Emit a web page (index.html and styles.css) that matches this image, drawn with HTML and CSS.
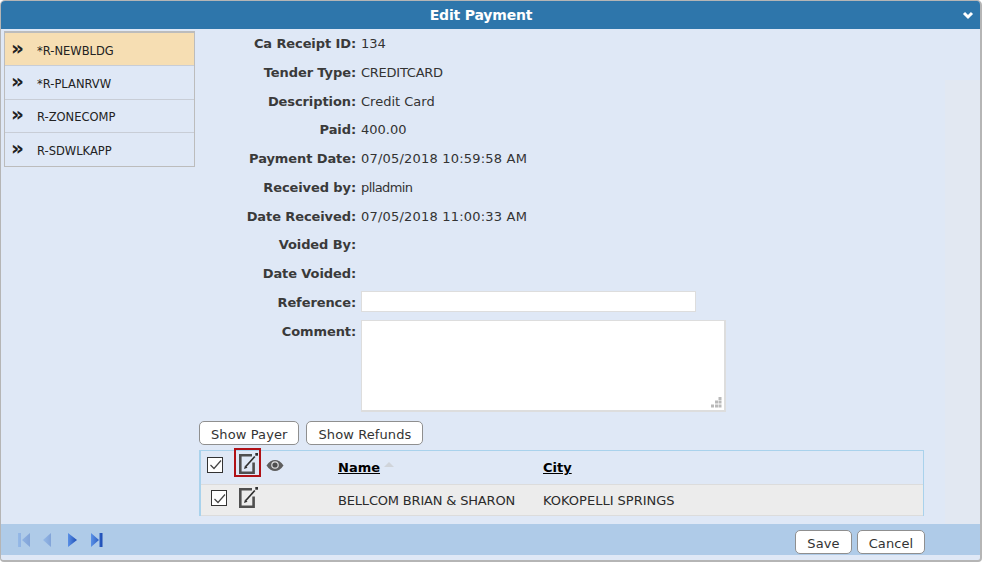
FILE: index.html
```html
<!DOCTYPE html>
<html lang="en">
<head>
<meta charset="utf-8">
<title>Edit Payment</title>
<link rel="stylesheet" href="styles.css">
</head>
<body>
<svg class="defs" width="0" height="0"><defs>
  <linearGradient id="tri" x1="0" y1="0" x2="1" y2="0"><stop offset="0" stop-color="#5a90e6"/><stop offset="1" stop-color="#1c4cb6"/></linearGradient>
  <symbol id="edit" viewBox="0 0 19 21"><path d="M13 2.300H1.300v17.400h13.300V9.500" fill="none" stroke="#4f4f4f" stroke-width="2.600"/><path d="M6.800 13.500 L15.800 3.500" fill="none" stroke="#2e2e2e" stroke-width="1.700"/><path d="M5 16l1-3.500 2.500 2.200z" fill="#2e2e2e"/><rect x="16.300" y="0" width="2.700" height="2.700" fill="#2e2e2e"/></symbol>
</defs></svg>
<div class="panel">
  <header class="head">
    <span class="head-title">Edit Payment</span>
    <svg class="head-chev" width="12" height="9" viewBox="0 0 12 9"><path d="M2 2 L6 6 L10 2" fill="none" stroke="#fff" stroke-width="3"/></svg>
  </header>
  <div class="body">
    <ul class="side">
      <li class="side-item active"><span class="raquo">»</span><span>*R-NEWBLDG</span></li>
      <li class="side-item"><span class="raquo">»</span><span>*R-PLANRVW</span></li>
      <li class="side-item"><span class="raquo">»</span><span>R-ZONECOMP</span></li>
      <li class="side-item"><span class="raquo">»</span><span>R-SDWLKAPP</span></li>
    </ul>
    <main class="content">
      <div class="form">
        <div class="lbl">Ca Receipt ID:</div><div class="val">134</div>
        <div class="lbl">Tender Type:</div><div class="val narrow">CREDITCARD</div>
        <div class="lbl">Description:</div><div class="val">Credit Card</div>
        <div class="lbl">Paid:</div><div class="val">400.00</div>
        <div class="lbl">Payment Date:</div><div class="val wide">07/05/2018 10:59:58 AM</div>
        <div class="lbl">Received by:</div><div class="val narrower">plladmin</div>
        <div class="lbl">Date Received:</div><div class="val wide">07/05/2018 11:00:33 AM</div>
        <div class="lbl">Voided By:</div><div class="val"></div>
        <div class="lbl">Date Voided:</div><div class="val"></div>
        <div class="lbl">Reference:</div><div class="val"><input class="ref" type="text"></div>
        <div class="lbl">Comment:</div><div class="val"><div class="comment"><svg class="grip" width="11" height="11" viewBox="0 0 11 11"><path fill="#b9b9b9" d="M7.500 0h3v3h-3zM4 3.500h3v3H4zM7.500 3.500h3v3h-3zM0 7.500h3v3H0zM4 7.500h3v3H4zM7.500 7.500h3v3h-3z"/></svg></div></div>
      </div>
      <div class="btn-row">
        <button class="btn" type="button">Show Payer</button>
        <button class="btn" type="button">Show Refunds</button>
      </div>
      <div class="grid">
        <div class="grid-row grid-head">
          <span class="cell-check"><span class="check"><svg width="13" height="11" viewBox="0 0 13 11"><path d="M1.500 6 L5 9.500 L12 1.500" fill="none" stroke="#444" stroke-width="1.200"/></svg></span></span>
          <span class="cell-edit"><span class="edit-focus"><svg width="19" height="21"><use href="#edit"/></svg></span></span>
          <span class="cell-eye"><svg width="18" height="13" viewBox="0 0 18 13"><path d="M0.500 6.500C3 2.500 6 1 9 1s6 1.500 8.500 5.500C15 10.500 12 12 9 12S3 10.500 0.500 6.500z" fill="#5e5e5e"/><circle cx="9" cy="6" r="3.800" fill="#ddd"/><circle cx="9" cy="6" r="2.600" fill="#4e4e4e"/></svg></span>
          <span class="cell-name"><a class="sort" href="#">Name</a><svg class="sort-arrow" width="10" height="5" viewBox="0 0 10 5"><path d="M5 0l5 5H0z" fill="#d0d4da"/></svg></span>
          <span class="cell-city"><a class="sort" href="#">City</a></span>
        </div>
        <div class="grid-row grid-data">
          <span class="cell-check"><span class="check"><svg width="13" height="11" viewBox="0 0 13 11"><path d="M1.500 6 L5 9.500 L12 1.500" fill="none" stroke="#444" stroke-width="1.200"/></svg></span></span>
          <span class="cell-edit"><svg class="row-edit" width="19" height="21"><use href="#edit"/></svg></span>
          <span class="cell-eye"></span>
          <span class="cell-name name-text">BELLCOM BRIAN &amp; SHARON</span>
          <span class="cell-city">KOKOPELLI SPRINGS</span>
        </div>
      </div>
    </main>
  </div>
  <footer class="foot">
    <div class="pager">
      <svg class="off" width="14" height="16" viewBox="0 0 14 16"><path d="M1 1h3v14H1z M13 1v14L5 8z" fill="url(#tri)"/></svg>
      <svg class="off" width="14" height="16" viewBox="0 0 14 16"><path d="M10 1v14L2 8z" fill="url(#tri)"/></svg>
      <svg width="14" height="16" viewBox="0 0 14 16"><path d="M3 1v14l9-7z" fill="url(#tri)"/></svg>
      <svg width="14" height="16" viewBox="0 0 14 16"><path d="M2 1v14l8-7z M10.500 1h3v14h-3z" fill="url(#tri)"/></svg>
    </div>
    <div class="foot-btns">
      <button class="btn btn-save" type="button">Save</button>
      <button class="btn btn-cancel" type="button">Cancel</button>
    </div>
  </footer>
</div>
</body>
</html>
```
FILE: styles.css
```css
* { box-sizing: border-box; }
html, body { margin: 0; height: 100%; background: #fff; }
body { font-family: "DejaVu Sans", Verdana, sans-serif; font-size: 13px; color: #2b2b2b; }
.defs { position: absolute; }
.panel { width: 982px; height: 562px; display: flex; flex-direction: column; background: #dfe8f6; border: 1px solid #b5b5b5; border-right-width: 2px; border-bottom-width: 2px; border-radius: 5px 5px 4px 4px; overflow: hidden; }
.head { flex: none; height: 28px; background: #2e76ab; display: flex; align-items: center; justify-content: center; padding-right: 19px; position: relative; }
.head-title { color: #fff; font-weight: bold; font-size: 14px; letter-spacing: -.18px; }
.head-chev { position: absolute; right: 6px; top: 10px; }
.body { flex: 1; display: flex; min-height: 0; background: linear-gradient(#e2e8f2, #e2e8f2) no-repeat 944px 51px / 36px 100%; }
.side { list-style: none; margin: 2px 0 0 3px; padding: 0; width: 191px; height: 136px; border: 1px solid #bcbcbc; border-top-width: 2px; flex: none; }
.side-item { height: 33.250px; display: flex; align-items: center; padding-top: 3px; border-bottom: 1px solid #c8cdd6; font-size: 11.500px; color: #222; }
.side-item:last-child { border-bottom: 0; }
.side-item.active { background: #f6deb3; }
.raquo { width: 32px; padding-left: 6px; font-size: 20px; line-height: 1; font-weight: bold; color: #222; position: relative; top: -3px; }
.content { width: 726px; margin-left: 4px; }
.form { display: grid; grid-template-columns: 157px 1fr; grid-auto-rows: 28.750px; column-gap: 5px; }
.lbl { text-align: right; font-weight: bold; line-height: 30px; color: #3a3a3a; white-space: nowrap; letter-spacing: -.1px; }
.val { line-height: 30px; color: #333; }
.narrow { letter-spacing: -.25px; }
.narrower { letter-spacing: -.6px; }
.wide { letter-spacing: .2px; }
.ref { display: block; margin-top: 3px; width: 335px; height: 21px; border: 1px solid #ddd; background: #fff; padding: 0; }
.comment { position: relative; margin-top: 3px; width: 365px; height: 92px; background: #fff; border: 1px solid #ddd; border-width: 1px 2px 2px 1px; }
.grip { position: absolute; right: 2px; bottom: 2px; }
.btn-row { display: flex; gap: 7px; margin-top: 76px; }
.btn { font-family: inherit; font-size: 13px; color: #333; height: 24px; padding: 2px 11px 0; background: #fff; border: 1px solid #8f8f8f; border-radius: 5px; letter-spacing: .1px; }
.btn-save { width: 57px; padding-left: 0; padding-right: 0; }
.btn-cancel { width: 68px; padding-left: 0; padding-right: 0; }
.grid { margin-top: 5px; width: 725px; border-left: 2px solid #a9d2ec; border-top: 1px solid #a9d2ec; border-right: 1px solid #a9d2ec; }
.grid-row { display: flex; align-items: center; }
.grid-head { height: 33px; }
.grid-data { height: 32px; background: #ececec; border-top: 1px solid #dcdcdc; border-bottom: 1px solid #dcdcdc; }
.cell-check { width: 34px; padding-left: 6px; display: flex; }
.grid-head .check { margin-bottom: 6px; }
.grid-data .cell-check { padding-left: 10px; }
.grid-data .check { margin-bottom: 4px; }
.check { width: 16px; height: 16px; border: 1px solid #333; background: #fff; display: flex; align-items: center; justify-content: center; }
.cell-edit { width: 31px; display: flex; }
.edit-focus { flex: none; width: 27px; height: 29px; margin-left: -1px; margin-bottom: 10px; border: 2px solid #b01116; display: flex; align-items: center; padding: 2px 0 0 3px; }
.row-edit { margin-left: 4px; margin-bottom: 5px; }
.cell-eye { width: 72px; display: flex; margin-bottom: 4px; }
.cell-name { width: 205px; }
.name-text { letter-spacing: -.18px; white-space: nowrap; }
.sort { color: #000; font-weight: bold; }
.sort-arrow { margin-left: 4px; vertical-align: 5px; }
.foot { flex: none; height: 31px; margin-bottom: 5px; background: #afcbe8; display: flex; justify-content: space-between; align-items: flex-start; padding: 0 55px 0 16px; }
.pager { display: flex; gap: 10px; margin-top: 8px; }
.off { opacity: .3; }
.foot-btns { display: flex; gap: 5px; margin-top: 6px; }
```
